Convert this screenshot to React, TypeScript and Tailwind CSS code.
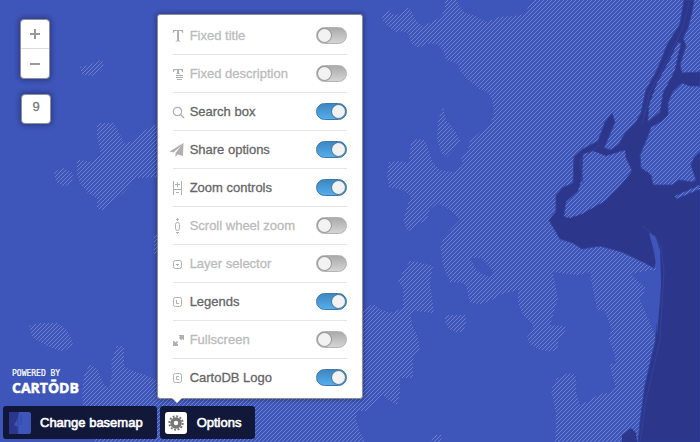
import React from 'react';

const land = [
  // large eastern terrain
  'M445 0H457L460 7L465 13L475 16L482 20L488 22L498 17L515 16L524 14L533 0H700V180L640 300L660 346L640 442H555L556 421L550 394L553 381L565 373H575L580 405L590 400L598 395L615 386L612 376L608 362L600 325L595 310L590 280L575 275L553 272L558 299L550 325L567 326L560 353L540 350L530 344L527 337L533 330L533 325L523 315L518 303V290L502 294L490 301L480 304L470 303L466 285L462 283L450 282L443 266L440 245L450 230L460 220L452 212L444 207L436 205L430 209L427 219L423 223L403 220L408 204L411 196L403 190L389 187L387 175L389 162L400 161L409 163L411 141L418 139L425 140L430 155L434 164L440 170L453 172L463 165L461 157L468 150L470 141L478 134L491 123L494 112L492 100L488 93L478 88L468 80L460 71L458 64L446 60L443 50L438 45L430 43L418 48L411 43L408 33L402 31L396 32L386 25L381 17L389 10L392 14L397 15L402 11L407 7L411 10L415 19L422 26L432 22L439 18L445 10Z',
  'M443 107L446 119L455 131L461 142L447 157L441 153L437 139L438 121Z',
  'M403 219H420L416 226L411 232L406 228Z',
  'M410 261L418 262L433 266L430 282L434 313L415 311L411 315L412 325L418 337L420 350L413 359V378H400V393L397 405L390 401L383 395L375 402L367 411H357L356 420L360 432L366 442H96L88 428L84 412L82 395L84 375L90 364L98 370L104 385L109 388L112 374L111 362L117 346H124L124 367L157 380L340 400L363 309L373 304L380 309L390 313L403 308L403 288L398 281L403 272Z',
  'M445 315H466V324L463 331L457 333L449 329L445 322Z',
  'M80 67L90 65L98 60L104 62L102 70L95 76L82 75Z',
  'M97 123H114L119 133L125 144L132 141L140 134L150 127L157 124V177L137 178L124 192L113 202L104 211L97 208V198L88 193L80 183L77 174V159L90 162L101 155L97 136Z',
  'M54 172L63 168L73 173L72 182L64 187L56 182Z',
  'M29 326L40 323H57L66 329L71 338L73 345L63 352L45 345L32 337Z',
  'M154 235H158V254H154Z',
  'M431 442L434 435H441L442 442Z',
  'M525 442L530 432L537 435L540 442Z',
];

const clearings = [
  'M553 273L576 276L590 272L592 285L597 310L604 310L612 330L608 338L614 354L616 363L609 364L615 386L608 393L595 394L581 405L576 392L577 375L568 373L557 378L551 390L553 400L556 413L553 442H520V350L544 353L558 350V342L567 328L554 320L556 309L562 302V292L557 282Z',
  'M631 274L650 270L662 272V300L649 297L647 289L640 283Z',
  'M470 258L481 258L488 265L493 272L489 277L477 271Z',
  'M430 213L437 203L450 210L457 220H428Z',
];

const water = [
  'M684 0H694L692 12L688 28L683 38L686 46L683 55L680 65L682 73L700 72V86L690 86L682 83L673 91L668 102V115L662 121L651 127L648 136L645 143L640 155L641 168L651 175L653 185L672 185L679 180L692 182L696 180L691 165L694 158L700 152V442H638L640 422L645 385L655 342L660 300V262L656 238L650 233L656 262L654 268L645 263L622 252L600 246L582 249L573 243L560 239L549 220L556 212V196L562 188L573 183L574 157L583 149L598 141L605 122L612 113L615 122L604 148L611 150L619 144L625 133L636 122L641 113L646 90L657 70L667 45L680 24Z',
];

const islands = [
  'M583 154L594 151L606 156L625 150L626 158L632 171L620 186L605 201L582 214L570 218L564 217L566 202L578 191L582 178Z',
  'M678 42L681 44L678 55L675 70L671 78L663 93L660 112L648 122L649 105L657 83L669 61Z',
  'M675 196L700 185V189L676 199Z',
];

function MapBackground() {
  return (
    <svg aria-hidden="true" className="absolute inset-0 h-full w-full" viewBox="0 0 700 442" preserveAspectRatio="xMinYMin slice">
      <defs>
        <pattern id="hatch" width="4" height="4" patternUnits="userSpaceOnUse">
          <path d="M3 0h1v1h-1zM2 1h1v1h-1zM1 2h1v1h-1zM0 3h1v1h-1z" fill="#6c80cd" shapeRendering="crispEdges" />
        </pattern>
      </defs>
      <rect width="700" height="442" fill="#3e55b9" />
      {land.map((d) => <path key={d} d={d} fill="url(#hatch)" />)}
      {clearings.map((d) => <path key={d} d={d} fill="#3e55b9" />)}
      {water.map((d) => <path key={d} d={d} fill="#2c378c" stroke="#33439b" strokeWidth="1" />)}
      {islands.map((d) => (
        <g key={d}>
          <path d={d} fill="#3e55b9" stroke="#33439b" />
          <path d={d} fill="url(#hatch)" />
        </g>
      ))}
      <path d="M649 233L655 236L660 250L661 285L657 335L656 270L655 254Z" fill="#3e55b9" />
      <path d="M622 442L622 435L631 428L636 433L637 442Z" fill="#2c378c" />
      <path d="M642 226L655 236L661 247L664 270L660 340L646 400L640 442M690 0L682 30L662 70L650 92L642 124M583 183L580 160L600 145" fill="none" stroke="#35419a" />
    </svg>
  );
}

type IconName = 'title' | 'description' | 'search' | 'share' | 'zoom' | 'wheel' | 'layer' | 'legend' | 'full' | 'logo';

const icons: Record<IconName, React.ReactNode> = {
  title: <path fill="currentColor" d="M2 2h10l.3 3h-.8C11 3.500 10.500 3 9 3H8v9c0 .7.500 1 1.500 1v.600h-5V13c1 0 1.500-.3 1.500-1V3H5c-1.500 0-2 .5-2.500 2h-.8z" />,
  description: (
    <path fill="currentColor" d="M2 3h10v3h-1c0-1.500-.5-2-2-2H8v3.500h1V8H5v-.5h1V4H5c-1.500 0-2 .5-2 2H2zM5 9h7v1H5zM5 11h7v1H5zM6 13h5v1H6z" />
  ),
  search: <g fill="none" stroke="currentColor" strokeWidth="1.200"><circle cx="6.500" cy="7.500" r="4.200" /><path d="M9.500 10.500l3.500 3.500" /></g>,
  share: <path fill="currentColor" d="M12.500 1L-1.500 9.500l4 1L10 4l-5.500 7v4l2-2.500L12 14z" />,
  zoom: <path fill="none" stroke="currentColor" d="M2.500 1v14M10.500 1v14M2.500 9.500h8M6.500 2v5M4 4.500h5M5 12.500h3" />,
  wheel: (
    <g fill="none" stroke="currentColor"><rect x="4.500" y="4.500" width="4" height="8" rx="2" /><path d="M5 1.500h3M6.500 0v3M5 14.500h3M6.500 14v2" /></g>
  ),
  layer: <g fill="none" stroke="currentColor"><rect x="2.500" y="4.500" width="8" height="8" rx="2" /><path d="M5 8.500h3M6.500 8v2" /></g>,
  legend: <g fill="none" stroke="currentColor"><rect x="2.500" y="3.500" width="8" height="9" rx="2" /><path d="M5.500 6v3.500H8" /></g>,
  full: <path fill="currentColor" d="M8 3h5v5h-1V7l-2 1-1-1-1-1 1-2H8zM2 9h1l1 1h1l1-1 1 1-1 2h1v2H2z" />,
  logo: <g fill="none" stroke="currentColor"><rect x="2.500" y="3.500" width="8" height="9" rx="2" /><path d="M8 6.500H5.500v3H8" /></g>,
};

const options: { label: string; icon: IconName; on: boolean }[] = [
  { label: 'Fixed title', icon: 'title', on: false },
  { label: 'Fixed description', icon: 'description', on: false },
  { label: 'Search box', icon: 'search', on: true },
  { label: 'Share options', icon: 'share', on: true },
  { label: 'Zoom controls', icon: 'zoom', on: true },
  { label: 'Scroll wheel zoom', icon: 'wheel', on: false },
  { label: 'Layer selector', icon: 'layer', on: false },
  { label: 'Legends', icon: 'legend', on: true },
  { label: 'Fullscreen', icon: 'full', on: false },
  { label: 'CartoDB Logo', icon: 'logo', on: true },
];

function OptionRow({ label, icon, on }: { label: string; icon: IconName; on: boolean }) {
  return (
    <li className="border-b border-[#e5e5e5] last:border-transparent">
      <label className="group flex h-[37px] items-center text-[#bbbbbb] has-checked:text-[#666666]">
        <svg aria-hidden="true" viewBox="0 0 16 16" className="-ml-0.5 h-4 w-4 shrink-0 overflow-visible text-[#b0b0b0]">{icons[icon]}</svg>
        <span className="ml-[3px] flex-1 whitespace-nowrap [-webkit-text-stroke:0.3px]">{label}</span>
        <input
          type="checkbox"
          defaultChecked={on}
          className="relative h-[17px] w-[31px] shrink-0 appearance-none rounded-full border border-[#b3b3b3] bg-linear-to-b from-[#aaaaaa] to-[#d5d5d5] before:absolute before:top-px before:left-px before:h-[13px] before:w-[13px] before:rounded-full before:bg-[#f2f2f2] before:shadow-[0_0_0_1px_#999999] checked:border-[#3f76a3] checked:from-[#3d87c0] checked:to-[#55aeee] checked:before:left-[15px] checked:before:shadow-[0_0_0_1px_#4b7ea8]"
        />
      </label>
    </li>
  );
}

export default function App() {
  return (
    <main className="relative flex min-h-screen flex-col overflow-hidden bg-[#3e55b9] font-['Liberation_Sans',Arial,sans-serif] text-[13px]">
      <MapBackground />
      <div className="relative flex flex-1 flex-col items-start px-5 pt-[19px] pb-2">
        <div className="flex w-[30px] flex-col divide-y divide-[#dddddd] rounded-[4px] border border-[#8f8f9c] bg-white text-[#999999] shadow-[0_0_4px_2px_rgba(0,0,0,0.25)]">
          <button aria-label="Zoom in" className="flex h-[29px] items-center justify-center">
            <svg viewBox="0 0 10 10" className="h-2.5 w-2.5" fill="currentColor"><path d="M4 0h2v4h4v2H6v4H4V6H0V4h4z" /></svg>
          </button>
          <button aria-label="Zoom out" className="flex h-[29px] items-center justify-center">
            <svg viewBox="0 0 10 10" className="h-2.5 w-2.5" fill="currentColor"><path d="M0 4h10v2H0z" /></svg>
          </button>
        </div>
        <output className="mt-[15px] ml-px flex h-[30px] w-[30px] items-center justify-center rounded-[4px] border border-[#8f8f9c] bg-white pb-1 text-[#777777] shadow-[0_0_4px_2px_rgba(0,0,0,0.25)] [-webkit-text-stroke:0.3px]">9</output>
      </div>

      <a href="#cartodb" aria-label="Powered by CartoDB" className="relative ml-3 flex flex-col items-start self-start pb-2 text-white">
        <span className="font-['DejaVu_Sans_Mono',monospace] text-[8px] leading-[8px] [-webkit-text-stroke:0.2px]">POWERED BY</span>
        <span className="font-['Open_Sans',sans-serif] text-[14px] leading-[20px] font-bold [-webkit-text-stroke:0.5px]">CARTŌDB</span>
      </a>

      <div className="relative flex items-start gap-[3px] px-[3px] pb-[3px] text-white [-webkit-text-stroke:0.6px]">
        <button className="flex h-[33px] items-center gap-[9px] rounded-[3px] bg-[#0c122e]/92 pr-3.5 pl-1.5">
          <svg viewBox="0 0 22 22" aria-hidden="true" className="h-[22px] w-[22px]">
            <rect width="22" height="22" rx="2" fill="#3e55b9" />
            <path d="M0 0h10L9 6 5 13l4 2v7H0z" fill="#2c378c" />
            <path d="M9 6v16M12 3v10" stroke="#3349a5" />
          </svg>
          Change basemap
        </button>
        <div className="relative">
          <button aria-expanded="true" className="flex h-[33px] items-center gap-2.5 rounded-[3px] bg-[#0c122e]/92 pr-3.5 pl-[5px]">
            <span className="flex h-[22px] w-[22px] items-center justify-center rounded-[3px] bg-white">
              <svg viewBox="0 0 16 16" aria-hidden="true" className="h-4 w-4 text-[#777777]">
                <circle cx="8" cy="8" r="4" fill="none" stroke="currentColor" strokeWidth="3.500" />
                <circle cx="8" cy="8" r="6.700" fill="none" stroke="currentColor" strokeWidth="2" strokeDasharray="1.900 1.608" />
              </svg>
            </span>
            Options
          </button>
          <div className="absolute bottom-10 -left-[3px] w-[206px] rounded-[3px] border border-[#8c8c96] bg-white px-[15px] pt-0.5 pb-px shadow-[0_0_4px_1px_rgba(0,0,0,0.3)]">
            <ul>{options.map((option) => <OptionRow key={option.label} {...option} />)}</ul>
            <span className="absolute top-full left-3.5 border-x-[5px] border-t-[5px] border-x-transparent border-t-white" />
          </div>
        </div>
      </div>
    </main>
  );
}
